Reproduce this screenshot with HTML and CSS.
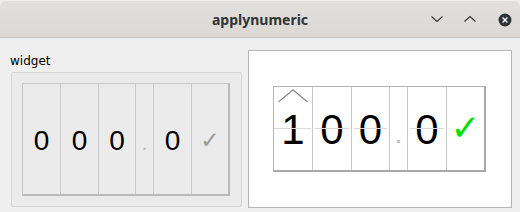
FILE: index.html
```html
<!DOCTYPE html>
<html>
<head>
<meta charset="utf-8">
<link rel="stylesheet" href="styles.css">
</head>
<body>
<div class="window">
  <div class="titlebar">
    <div class="title">applynumeric</div>
    <div class="controls">
      <svg class="btn" width="14" height="10" viewBox="0 0 14 10"><polyline points="1.5,2.5 7,7.5 12.5,2.5" fill="none" stroke="#2e3436" stroke-width="1.1"/></svg>
      <svg class="btn" width="14" height="10" viewBox="0 0 14 10"><polyline points="1.5,7.5 7,2.5 12.5,7.5" fill="none" stroke="#2e3436" stroke-width="1.1"/></svg>
      <svg class="btn close" width="14" height="14" viewBox="0 0 14 14"><circle cx="7" cy="7" r="6.5" fill="#2e3436"/><path d="M4.6 4.6 L9.4 9.4 M9.4 4.6 L4.6 9.4" stroke="#fff" stroke-width="1.4"/></svg>
    </div>
  </div>
  <div class="content">
    <div class="left">
      <div class="label">widget</div>
      <div class="group">
        <div class="num small">
          <div class="cell">0</div>
          <div class="cell">0</div>
          <div class="cell">0</div>
          <div class="cell dot">.</div>
          <div class="cell">0</div>
          <div class="cell check">✓</div>
        </div>
      </div>
    </div>
    <div class="panel">
      <div class="num big">
        <div class="cell"><svg class="chev" width="30" height="14" viewBox="0 0 30 14"><polyline points="0.5,13 15,0.8 29.5,13" fill="none" stroke="#8a8a8a" stroke-width="1.3"/></svg>1<span class="mid"></span></div>
        <div class="cell">0<span class="mid"></span></div>
        <div class="cell">0<span class="mid"></span></div>
        <div class="cell dot">.</div>
        <div class="cell">0<span class="mid"></span></div>
        <div class="cell check">✓</div>
      </div>
    </div>
  </div>
</div>
</body>
</html>
```
FILE: styles.css
```css
html, body {
  margin: 0;
  padding: 0;
}
body {
  width: 520px;
  height: 212px;
  overflow: hidden;
  background: #efefef;
}
.window {
  display: flex;
  flex-direction: column;
  width: 520px;
  height: 212px;
}
.titlebar {
  height: 37px;
  border-bottom: 1px solid #c4c1bc;
  background: linear-gradient(#e2e0dc, #dcd9d5);
  border-top-left-radius: 6px;
  border-top-right-radius: 6px;
  box-shadow: inset 0 1px 0 #f0eeeb;
  position: relative;
  display: flex;
  align-items: center;
  justify-content: center;
}
.title {
  font-family: "Noto Sans", "DejaVu Sans", sans-serif;
  font-weight: bold;
  font-size: 14px;
  color: #2e3436;
  padding-top: 1px;
}
.controls {
  position: absolute;
  right: 8px;
  top: 0;
  height: 37px;
  display: flex;
  align-items: center;
  gap: 19px;
}
.btn {
  display: block;
}
.close {
  margin-left: 2px;
  margin-top: 2px;
}
.content {
  display: flex;
  padding: 12px 0 0 10px;
  gap: 6px;
}
.left {
  display: flex;
  flex-direction: column;
}
.label {
  font-family: "DejaVu Sans", sans-serif;
  font-size: 12px;
  line-height: 16px;
  padding-top: 3px;
  margin-bottom: 3px;
  color: #000;
}
.group {
  margin-left: 1px;
  width: 209px;
  height: 113px;
  padding: 10px;
  border: 1px solid #d6d6d6;
  border-radius: 2px;
  background: #ebebeb;
}
.num {
  display: flex;
  border-style: solid;
  border-width: 1px 2px 2px 1px;
  font-family: "Liberation Sans", Arial, sans-serif;
  color: #000;
}
.cell {
  position: relative;
  display: flex;
  flex: none;
  align-items: center;
  justify-content: center;
  line-height: 1;
  border-right: 1px solid;
  box-sizing: border-box;
}
.cell:last-child {
  border-right: 0;
}
.small {
  width: 205px;
  height: 110px;
  border-color: #c6c6c6 #b9b9b9 #b9b9b9 #c6c6c6;
  background: #ebebeb;
  font-size: 28px;
}
.small .cell {
  width: 38px;
  border-right-color: #cacaca;
  padding-top: 3px;
}
.small .cell:nth-child(3) { width: 37px; }
.small .cell.dot { width: 18px; color: #bdbdbd; font-size: 22px; padding-top: 7px; }
.small .cell.check { width: 36px; color: #9a9a9a; font-family: "DejaVu Sans", sans-serif; font-size: 23px; padding-top: 2px; }

.panel {
  width: 262px;
  height: 156px;
  border: 1px solid #b5b5b5;
  background: #fff;
  display: flex;
  align-items: center;
  justify-content: center;
}
.big {
  width: 210px;
  height: 83px;
  margin-top: -1px;
  margin-left: -1px;
  border-color: #b4b4b4 #a9a9a9 #a9a9a9 #b4b4b4;
  background: #fff;
  font-size: 42px;
}
.big .cell {
  width: 39px;
  border-right-color: #c8c8c8;
  padding-top: 4px;
}
.big .cell:nth-child(3) { width: 38px; }
.big .cell.dot { width: 18px; color: #c4c4c4; font-size: 30px; padding-top: 9px; }
.big .cell.check { width: 37px; color: #00e000; font-family: "DejaVu Sans", sans-serif; font-size: 36px; padding-top: 0; }
.mid {
  position: absolute;
  left: 2px;
  right: 2px;
  top: 41px;
  height: 1px;
  background: #d9d9d9;
}
.cell:first-child .mid {
  left: 0;
  right: 1px;
}
.chev {
  position: absolute;
  left: 4px;
  top: 2px;
}
```
